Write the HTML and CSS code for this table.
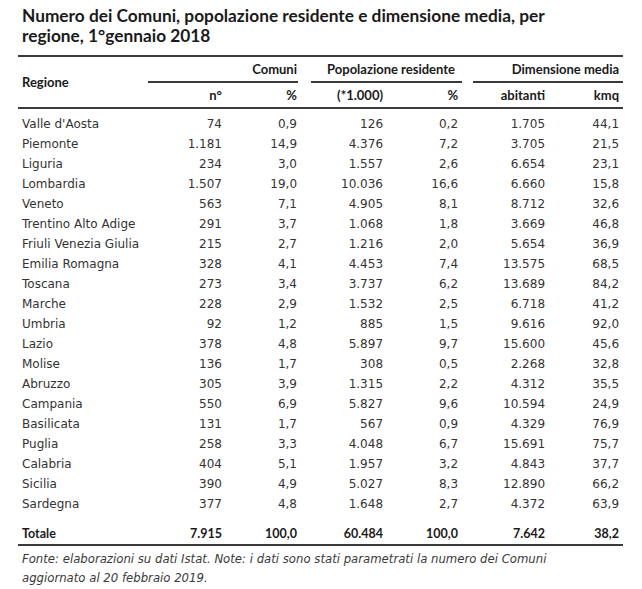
FILE: index.html
```html
<!DOCTYPE html>
<html lang="it">
<head>
<meta charset="utf-8">
<title>Numero dei Comuni</title>
<link rel="stylesheet" href="styles.css">
</head>
<body>
<div class="page">
  <h1 class="title">Numero dei Comuni, popolazione residente e dimensione media, per<br>regione, 1°gennaio 2018</h1>
  <table class="tbl">
    <colgroup>
      <col class="c-reg"><col class="c-n"><col class="c-p1"><col class="c-sp1"><col class="c-pop"><col class="c-p2"><col class="c-sp2"><col class="c-ab"><col class="c-km">
    </colgroup>
    <thead>
      <tr class="ha">
        <th rowspan="2" class="reg">Regione</th>
        <th colspan="2" class="grp g1">Comuni</th>
        <th class="sp"></th>
        <th colspan="2" class="grp g2">Popolazione residente</th>
        <th class="sp"></th>
        <th colspan="2" class="grp g3">Dimensione media</th>
      </tr>
      <tr class="hb">
        <th class="n">n°</th><th class="p1">%</th><th class="sp"></th>
        <th class="pop">(*1.000)</th><th class="p2">%</th><th class="sp"></th>
        <th class="ab">abitanti</th><th class="km">kmq</th>
      </tr>
    </thead>
    <tbody>
      <tr class="first"><td class="reg">Valle d'Aosta</td><td class="n">74</td><td class="p1">0,9</td><td></td><td class="pop">126</td><td class="p2">0,2</td><td></td><td class="ab">1.705</td><td class="km">44,1</td></tr>
      <tr><td class="reg">Piemonte</td><td class="n">1.181</td><td class="p1">14,9</td><td></td><td class="pop">4.376</td><td class="p2">7,2</td><td></td><td class="ab">3.705</td><td class="km">21,5</td></tr>
      <tr><td class="reg">Liguria</td><td class="n">234</td><td class="p1">3,0</td><td></td><td class="pop">1.557</td><td class="p2">2,6</td><td></td><td class="ab">6.654</td><td class="km">23,1</td></tr>
      <tr><td class="reg">Lombardia</td><td class="n">1.507</td><td class="p1">19,0</td><td></td><td class="pop">10.036</td><td class="p2">16,6</td><td></td><td class="ab">6.660</td><td class="km">15,8</td></tr>
      <tr><td class="reg">Veneto</td><td class="n">563</td><td class="p1">7,1</td><td></td><td class="pop">4.905</td><td class="p2">8,1</td><td></td><td class="ab">8.712</td><td class="km">32,6</td></tr>
      <tr><td class="reg">Trentino Alto Adige</td><td class="n">291</td><td class="p1">3,7</td><td></td><td class="pop">1.068</td><td class="p2">1,8</td><td></td><td class="ab">3.669</td><td class="km">46,8</td></tr>
      <tr><td class="reg">Friuli Venezia Giulia</td><td class="n">215</td><td class="p1">2,7</td><td></td><td class="pop">1.216</td><td class="p2">2,0</td><td></td><td class="ab">5.654</td><td class="km">36,9</td></tr>
      <tr><td class="reg">Emilia Romagna</td><td class="n">328</td><td class="p1">4,1</td><td></td><td class="pop">4.453</td><td class="p2">7,4</td><td></td><td class="ab">13.575</td><td class="km">68,5</td></tr>
      <tr><td class="reg">Toscana</td><td class="n">273</td><td class="p1">3,4</td><td></td><td class="pop">3.737</td><td class="p2">6,2</td><td></td><td class="ab">13.689</td><td class="km">84,2</td></tr>
      <tr><td class="reg">Marche</td><td class="n">228</td><td class="p1">2,9</td><td></td><td class="pop">1.532</td><td class="p2">2,5</td><td></td><td class="ab">6.718</td><td class="km">41,2</td></tr>
      <tr><td class="reg">Umbria</td><td class="n">92</td><td class="p1">1,2</td><td></td><td class="pop">885</td><td class="p2">1,5</td><td></td><td class="ab">9.616</td><td class="km">92,0</td></tr>
      <tr><td class="reg">Lazio</td><td class="n">378</td><td class="p1">4,8</td><td></td><td class="pop">5.897</td><td class="p2">9,7</td><td></td><td class="ab">15.600</td><td class="km">45,6</td></tr>
      <tr><td class="reg">Molise</td><td class="n">136</td><td class="p1">1,7</td><td></td><td class="pop">308</td><td class="p2">0,5</td><td></td><td class="ab">2.268</td><td class="km">32,8</td></tr>
      <tr><td class="reg">Abruzzo</td><td class="n">305</td><td class="p1">3,9</td><td></td><td class="pop">1.315</td><td class="p2">2,2</td><td></td><td class="ab">4.312</td><td class="km">35,5</td></tr>
      <tr><td class="reg">Campania</td><td class="n">550</td><td class="p1">6,9</td><td></td><td class="pop">5.827</td><td class="p2">9,6</td><td></td><td class="ab">10.594</td><td class="km">24,9</td></tr>
      <tr><td class="reg">Basilicata</td><td class="n">131</td><td class="p1">1,7</td><td></td><td class="pop">567</td><td class="p2">0,9</td><td></td><td class="ab">4.329</td><td class="km">76,9</td></tr>
      <tr><td class="reg">Puglia</td><td class="n">258</td><td class="p1">3,3</td><td></td><td class="pop">4.048</td><td class="p2">6,7</td><td></td><td class="ab">15.691</td><td class="km">75,7</td></tr>
      <tr><td class="reg">Calabria</td><td class="n">404</td><td class="p1">5,1</td><td></td><td class="pop">1.957</td><td class="p2">3,2</td><td></td><td class="ab">4.843</td><td class="km">37,7</td></tr>
      <tr><td class="reg">Sicilia</td><td class="n">390</td><td class="p1">4,9</td><td></td><td class="pop">5.027</td><td class="p2">8,3</td><td></td><td class="ab">12.890</td><td class="km">66,2</td></tr>
      <tr><td class="reg">Sardegna</td><td class="n">377</td><td class="p1">4,8</td><td></td><td class="pop">1.648</td><td class="p2">2,7</td><td></td><td class="ab">4.372</td><td class="km">63,9</td></tr>
      <tr class="total"><td class="reg">Totale</td><td class="n">7.915</td><td class="p1">100,0</td><td></td><td class="pop">60.484</td><td class="p2">100,0</td><td></td><td class="ab">7.642</td><td class="km">38,2</td></tr>
    </tbody>
  </table>
  <p class="note">Fonte: elaborazioni su dati Istat. Note: i dati sono stati parametrati la numero dei Comuni<br>aggiornato al 20 febbraio 2019.</p>
</div>
</body>
</html>
```

FILE: styles.css
```css
html, body {
  margin: 0;
  padding: 0;
  background: #ffffff;
}

.page {
  padding: 6px 0 0 18px;
  font-family: "DejaVu Sans", "Liberation Sans", sans-serif;
  color: #2b2b2b;
}

.title {
  margin: 0 0 9px 0;
  padding-left: 4px;
  font-family: "Lato", "DejaVu Sans", sans-serif;
  font-weight: 700;
  font-size: 17.3px;
  line-height: 20px;
  color: #1a1a1a;
}

.tbl {
  width: 605px;
  border-collapse: collapse;
  table-layout: fixed;
  font-size: 12px;
}

.c-reg { width: 130px; }
.c-n { width: 74px; }
.c-p1 { width: 76px; }
.c-sp1 { width: 13px; }
.c-pop { width: 72px; }
.c-p2 { width: 79px; }
.c-sp2 { width: 11px; }
.c-ab { width: 72px; }
.c-km { width: 78px; }

.tbl th,
.tbl td {
  padding: 0;
  text-align: right;
  white-space: nowrap;
}

.tbl th {
  font-family: "Lato", "DejaVu Sans", sans-serif;
  font-weight: 700;
  font-size: 13px;
  color: #1a1a1a;
}

.tbl .reg {
  text-align: left;
  padding-left: 4px;
}

.ha th {
  border-top: 2px solid #3a3a3a;
  height: 24px;
}

.ha .reg {
  border-bottom: 2px solid #3a3a3a;
}

.tbl .grp {
  border-bottom: 2px solid #3a3a3a;
}

.tbl .g1 { padding-right: 1px; }
.tbl .g2 { padding-right: 7px; }
.tbl .g3 { padding-right: 4px; }

.hb th {
  height: 24px;
  border-bottom: 2px solid #3a3a3a;
}

.tbl .p1 { padding-right: 1px; }
.tbl .p2 { padding-right: 4px; }
.tbl .km { padding-right: 4px; }

.tbl td {
  height: 20px;
  line-height: 20px;
  color: #333333;
}

.first td {
  padding-top: 5px;
}

.total td {
  padding-top: 10px;
  font-family: "Lato", "DejaVu Sans", sans-serif;
  font-weight: 700;
  font-size: 12.5px;
  color: #1a1a1a;
  border-bottom: 2px solid #3a3a3a;
}

.note {
  margin: 4px 0 0 0;
  padding-left: 4px;
  font-style: italic;
  font-size: 11.7px;
  line-height: 19px;
  color: #3a3a3a;
}
```
